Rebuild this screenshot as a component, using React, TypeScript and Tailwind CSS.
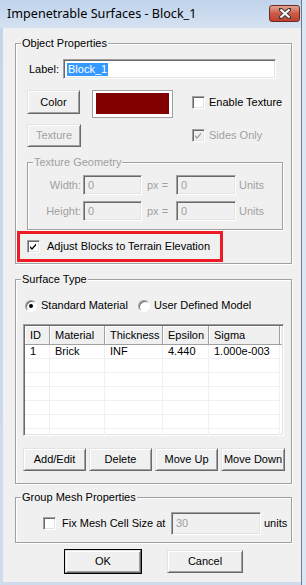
import React from "react";
import clsx from "clsx";

const ui = "font-['Liberation_Sans',Arial,sans-serif] text-[11px] leading-[13px]";

function GroupBox({
  title,
  className,
  disabled,
  children,
}: {
  title: string;
  className?: string;
  disabled?: boolean;
  children?: React.ReactNode;
}) {
  return (
    <div className={clsx("relative flex flex-col border border-[#a0a0a0] shadow-[inset_1px_1px_0_#fff,1px_1px_0_#fff]", className)}>
      <span
        className={clsx(
          "absolute -top-[7px] left-[5px] bg-[#f0f0f0] px-[1px] whitespace-nowrap",
          disabled ? "text-[#a0a0a0]" : "text-black"
        )}
      >
        {title}
      </span>
      {children}
    </div>
  );
}

function Btn({ label, className, disabled, isDefault }: { label: string; className?: string; disabled?: boolean; isDefault?: boolean }) {
  return (
    <button
      type="button"
      className={clsx(
        "flex shrink-0 items-center justify-center bg-[#f0f0f0] border-t border-l border-t-[#e3e3e3] border-l-[#e3e3e3] border-b border-r border-b-[#696969] border-r-[#696969] shadow-[inset_1px_1px_0_#fff,inset_-1px_-1px_0_#a0a0a0]",
        isDefault && "outline outline-1 outline-black",
        disabled ? "text-[#a0a0a0]" : "text-black",
        className
      )}
    >
      {label}
    </button>
  );
}

function TextBox({ value, className, disabled, selected }: { value: string; className?: string; disabled?: boolean; selected?: boolean }) {
  return (
    <div
      className={clsx(
        "flex shrink-0 items-center pl-[3px] border-t border-l border-t-[#a0a0a0] border-l-[#a0a0a0] border-b border-r border-b-white border-r-white shadow-[inset_1px_1px_0_#696969,inset_-1px_-1px_0_#e3e3e3]",
        disabled ? "bg-[#f0f0f0] text-[#a0a0a0]" : "bg-white text-black",
        className
      )}
    >
      {selected ? <span className="bg-[#3399ff] text-white px-[1px]">{value}</span> : <span className="px-[1px]">{value}</span>}
    </div>
  );
}

function Check({ checked, disabled }: { checked?: boolean; disabled?: boolean }) {
  return (
    <span
      className={clsx(
        "flex h-[13px] w-[13px] shrink-0 items-center justify-center border-t border-l border-t-[#a0a0a0] border-l-[#a0a0a0] border-b border-r border-b-white border-r-white shadow-[inset_1px_1px_0_#696969,inset_-1px_-1px_0_#e3e3e3]",
        disabled ? "bg-[#f0f0f0]" : "bg-white"
      )}
    >
      {checked && (
        <svg width="9" height="9" viewBox="0 0 9 9">
          <path d="M1 4 L3 6 L7 1.5 L7 3.5 L3 8 L1 6 Z" fill={disabled ? "#a0a0a0" : "#000"} />
        </svg>
      )}
    </span>
  );
}

function Radio({ checked }: { checked?: boolean }) {
  return (
    <span className="flex h-[12px] w-[12px] shrink-0 items-center justify-center rounded-full border border-[#a0a0a0] border-b-white border-r-white bg-white shadow-[inset_1px_1px_0_#696969]">
      {checked && <span className="h-[4px] w-[4px] rounded-full bg-black" />}
    </span>
  );
}

const cols = [
  { name: "ID", w: "w-[25px]" },
  { name: "Material", w: "w-[55px]" },
  { name: "Thickness", w: "w-[58px]" },
  { name: "Epsilon", w: "w-[46px]" },
  { name: "Sigma", w: "w-[71px]" },
];

const rows = [["1", "Brick", "INF", "4.440", "1.000e-003"], ["", "", "", "", ""], ["", "", "", "", ""], ["", "", "", "", ""], ["", "", "", "", ""], ["", "", "", "", ""], ["", "", "", "", ""]];

function MaterialTable() {
  return (
    <div className="ml-[7px] mt-[12px] h-[112px] w-[261px] overflow-hidden border-t border-l border-t-[#a0a0a0] border-l-[#a0a0a0] border-b border-r border-b-white border-r-white bg-white shadow-[inset_1px_1px_0_#696969,inset_-1px_-1px_0_#e3e3e3] p-[1px]">
      <div className="flex h-[19px] bg-[#f0f0f0]">
        {cols.map((c) => (
          <div
            key={c.name}
            className={clsx(c.w, "flex shrink-0 items-center pl-[5px] border-r border-b border-r-[#a0a0a0] border-b-[#a0a0a0] shadow-[inset_1px_1px_0_#fff]")}
          >
            {c.name}
          </div>
        ))}
        <div className="flex-1 border-b border-b-[#a0a0a0] shadow-[inset_1px_1px_0_#fff]" />
      </div>
      {rows.map((r, i) => (
        <div key={i} className="flex h-[14px]">
          {r.map((v, j) => (
            <div key={j} className={clsx(cols[j].w, "flex shrink-0 items-center pl-[5px] border-r border-b border-[#f0f0f0]")}>
              {v}
            </div>
          ))}
        </div>
      ))}
    </div>
  );
}

export default function App() {
  return (
    <div className={clsx(ui, "flex h-[585px] w-[306px] bg-[#dce7f4]")}>
      <div className="flex h-[585px] w-[302px] flex-col bg-gradient-to-b from-[#c3d5ec] to-[#cedcee] border-r border-[#6b7b90]">
        {/* title bar */}
        <div className="relative flex h-[28px] shrink-0 items-center pl-[7px] bg-gradient-to-b from-[#c0d3eb] to-[#d5e2f2]">
          <span className="font-['Noto_Sans',sans-serif] text-[12.6px] text-black pb-[1px]">Impenetrable Surfaces - Block_1</span>
          <div className="absolute right-[1px] top-[5px] flex h-[17px] w-[31px] items-center justify-center rounded-[3px] border border-[#6e2a22] bg-gradient-to-b from-[#e5a393] via-[#cc5a48] to-[#c0402f]">
            <svg width="12" height="11" viewBox="0 0 12 11">
              <path d="M1 1 L11 10 M11 1 L1 10" stroke="#3b3b3b" strokeWidth="4" strokeLinecap="square" />
              <path d="M1.5 1.5 L10.5 9.5 M10.5 1.5 L1.5 9.5" stroke="#fff" strokeWidth="2" />
            </svg>
          </div>
        </div>

        {/* client area */}
        <div className="ml-[3px] flex h-[554px] w-[298px] flex-col bg-[#f0f0f0]">
          <GroupBox title="Object Properties" className="ml-[12px] mt-[15px] h-[221px] w-[277px]">
            <div className="mt-[15px] flex h-[20px] items-center pl-[13px]">
              <span className="w-[34px] shrink-0">Label:</span>
              <TextBox value="Block_1" selected className="h-[20px] w-[213px]" />
            </div>

            <div className="mt-[11px] flex h-[28px] items-start pl-[11px]">
              <div className="flex w-[165px] shrink-0 items-start">
                <Btn label="Color" className="h-[24px] w-[53px]" />
                <div className="ml-[12px] h-[28px] w-[81px] border border-[#a0a0a0] bg-white pl-[3px] pr-[3px] pt-[2px] pb-[3px]">
                  <div className="h-full w-full bg-[#800000]" />
                </div>
              </div>
              <div className="mt-[6px] flex items-center">
                <Check />
                <span className="ml-[4px]">Enable Texture</span>
              </div>
            </div>

            <div className="mt-[6px] flex h-[23px] items-center pl-[11px]">
              <div className="flex w-[165px] shrink-0">
                <Btn label="Texture" disabled className="h-[23px] w-[54px]" />
              </div>
              <div className="flex items-center">
                <Check checked disabled />
                <span className="ml-[4px] text-[#a0a0a0]">Sides Only</span>
              </div>
            </div>

            <GroupBox title="Texture Geometry" disabled className="ml-[11px] mt-[15px] h-[68px] w-[256px]">
              {["Width:", "Height:"].map((l, i) => (
                <div key={l} className={clsx("flex h-[20px] items-center text-[#a0a0a0]", i === 0 ? "mt-[12px]" : "mt-[6px]")}>
                  <span className="w-[53px] shrink-0 text-right">{l}</span>
                  <TextBox value="0" disabled className="ml-[2px] h-[20px] w-[59px]" />
                  <span className="ml-[5px] w-[29px] shrink-0">px =</span>
                  <TextBox value="0" disabled className="h-[20px] w-[60px]" />
                  <span className="ml-[3px]">Units</span>
                </div>
              ))}
            </GroupBox>

            <div className="ml-[1px] mt-[1px] flex h-[31px] w-[206px] items-center border-[3px] border-[#ed1c24] pl-[7px]">
              <Check checked />
              <span className="ml-[7px]">Adjust Blocks to Terrain Elevation</span>
            </div>
          </GroupBox>

          <GroupBox title="Surface Type" className="ml-[12px] mt-[15px] h-[205px] w-[277px]">
            <div className="mt-[19px] flex h-[13px] items-center pl-[9px]">
              <div className="flex w-[113px] shrink-0 items-center">
                <Radio checked />
                <span className="ml-[4px]">Standard Material</span>
              </div>
              <Radio />
              <span className="ml-[4px]">User Defined Model</span>
            </div>

            <MaterialTable />

            <div className="ml-[7px] mt-[12px] flex gap-[3px]">
              <Btn label="Add/Edit" className="h-[23px] w-[63px]" />
              <Btn label="Delete" className="h-[23px] w-[63px]" />
              <Btn label="Move Up" className="h-[23px] w-[63px]" />
              <Btn label="Move Down" className="h-[23px] w-[64px]" />
            </div>
          </GroupBox>

          <GroupBox title="Group Mesh Properties" className="ml-[12px] mt-[13px] h-[46px] w-[277px]">
            <div className="mt-[14px] flex h-[23px] items-center pl-[27px]">
              <Check />
              <span className="ml-[6px] w-[109px] shrink-0">Fix Mesh Cell Size at</span>
              <TextBox value="30" disabled className="h-[23px] w-[90px]" />
              <span className="ml-[3px]">units</span>
            </div>
          </GroupBox>

          <div className="mt-[7px] flex pl-[62px]">
            <Btn label="OK" isDefault className="h-[23px] w-[76px]" />
            <Btn label="Cancel" className="ml-[26px] h-[23px] w-[76px]" />
          </div>
        </div>
      </div>
    </div>
  );
}
